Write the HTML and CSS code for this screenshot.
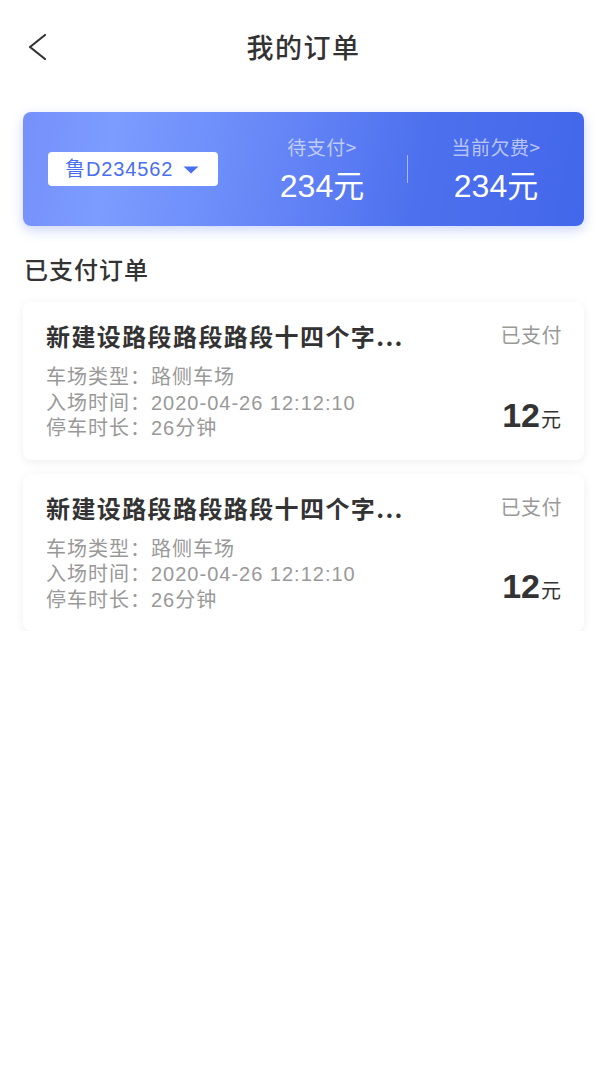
FILE: index.html
```html
<!DOCTYPE html>
<html lang="zh-CN">
<head>
<meta charset="utf-8">
<title>我的订单</title>
<link rel="stylesheet" href="styles.css">
</head>
<body>
<header class="nav">
  <div class="nav-left">
    <svg class="back" width="20" height="28" viewBox="0 0 20 28" aria-hidden="true">
      <path d="M18 2 L3 14 L18 26" fill="none" stroke="#333" stroke-width="2.2" stroke-linecap="round" stroke-linejoin="round"/>
    </svg>
  </div>
  <h1 class="nav-title">我的订单</h1>
  <div class="nav-right"></div>
</header>

<section class="summary">
  <div class="plate">
    <span class="plate-no">鲁D234562</span>
    <svg class="caret" width="16" height="8" viewBox="0 0 16 8" aria-hidden="true"><path d="M0.5 0.5 H15.5 L8 7.5 Z" fill="#4a6ef0"/></svg>
  </div>
  <div class="stat stat-first">
    <div class="stat-label">待支付&gt;</div>
    <div class="stat-value">234<span class="unit">元</span></div>
  </div>
  <div class="divider"></div>
  <div class="stat stat-last">
    <div class="stat-label">当前欠费&gt;</div>
    <div class="stat-value">234<span class="unit">元</span></div>
  </div>
</section>

<h2 class="section-title">已支付订单</h2>

<div class="orders">
  <article class="order">
    <div class="order-main">
      <div class="order-title">新建设路段路段路段十四个字...</div>
      <div class="order-info">
        <div class="row">车场类型：路侧车场</div>
        <div class="row">入场时间：2020-04-26 12:12:10</div>
        <div class="row">停车时长：26分钟</div>
      </div>
    </div>
    <div class="order-side">
      <div class="status">已支付</div>
      <div class="price">12<span class="price-unit">元</span></div>
    </div>
  </article>
  <article class="order">
    <div class="order-main">
      <div class="order-title">新建设路段路段路段十四个字...</div>
      <div class="order-info">
        <div class="row">车场类型：路侧车场</div>
        <div class="row">入场时间：2020-04-26 12:12:10</div>
        <div class="row">停车时长：26分钟</div>
      </div>
    </div>
    <div class="order-side">
      <div class="status">已支付</div>
      <div class="price">12<span class="price-unit">元</span></div>
    </div>
  </article>
</div>
</body>
</html>
```

FILE: styles.css
```css
* { box-sizing: border-box; }
html, body { margin: 0; padding: 0; background: #fff; }
body {
  font-family: "Liberation Sans", "Noto Sans CJK SC", sans-serif;
  color: #333;
  width: 607px;
}

.nav {
  height: 94px;
  display: grid;
  grid-template-columns: 1fr auto 1fr;
  align-items: center;
}
.nav-left { padding-left: 27px; display: flex; align-items: center; }
.back { display: block; }
.nav-title {
  margin: 0;
  font-family: "Noto Sans CJK SC", sans-serif;
  font-size: 27px;
  font-weight: 500;
  line-height: 36px;
  letter-spacing: 1.5px;
  color: #333;
}

.summary {
  margin: 18px 23px 0;
  height: 114px;
  border-radius: 8px;
  background: linear-gradient(100deg, #7690fb 0%, #7c9cff 16%, #6686f7 45%, #4d70ee 70%, #4367ea 100%);
  box-shadow: 0 4px 12px rgba(68, 103, 234, 0.28);
  display: flex;
  align-items: center;
  padding-left: 25px;
}
.plate {
  width: 170px;
  height: 34px;
  background: #fff;
  border-radius: 4px;
  display: flex;
  align-items: center;
  padding-left: 17px;
  gap: 10px;
}
.plate-no {
  font-size: 20px;
  letter-spacing: 0.9px;
  color: #4a6ef0;
  line-height: 34px;
}
.caret { display: block; margin-top: 1px; }

.stat {
  display: flex;
  flex-direction: column;
  align-items: center;
  color: #fff;
}
.stat-first { width: 170px; margin-left: 19px; }
.stat-last { flex: 1; }
.stat-label {
  font-family: "Noto Sans CJK SC", sans-serif;
  font-size: 19px;
  line-height: 26px;
  color: rgba(255, 255, 255, 0.62);
  letter-spacing: 0.5px;
}
.stat-value {
  margin-top: 8px;
  font-size: 32px;
  line-height: 36px;
  color: #fff;
}
.unit { font-family: "Noto Sans CJK SC", sans-serif; font-size: 31px; line-height: 1; }
.divider {
  width: 1px;
  height: 28px;
  background: rgba(255, 255, 255, 0.5);
}

.section-title {
  margin: 26px 0 0 24px;
  font-family: "Noto Sans CJK SC", sans-serif;
  font-size: 24px;
  font-weight: 500;
  line-height: 34px;
  letter-spacing: 1px;
  color: #333;
}

.orders {
  margin: 16px 23px 0;
  display: flex;
  flex-direction: column;
  gap: 14px;
}
.order {
  background: #fff;
  border-radius: 8px;
  box-shadow: 0 2px 10px rgba(0, 0, 0, 0.07);
  padding: 18px 23px 18px;
  display: flex;
  justify-content: space-between;
}
.order-title {
  font-family: "Noto Sans CJK SC", sans-serif;
  font-size: 24px;
  font-weight: 700;
  line-height: 32px;
  letter-spacing: 1.4px;
  color: #333;
}
.order-info {
  margin-top: 13px;
  font-size: 20px;
  line-height: 25.5px;
  letter-spacing: 1px;
  color: #999;
}

.order-side {
  display: flex;
  flex-direction: column;
  justify-content: space-between;
  align-items: flex-end;
}
.status {
  font-family: "Noto Sans CJK SC", sans-serif;
  font-size: 20px;
  line-height: 30px;
  letter-spacing: 0.5px;
  margin-right: -1px;
  color: #999;
}
.price {
  font-size: 34px;
  font-weight: 700;
  line-height: 40px;
  margin-bottom: 7px;
  color: #333;
}
.price-unit {
  font-family: "Noto Sans CJK SC", sans-serif;
  font-size: 20px;
  font-weight: 400;
  line-height: 1;
  margin-left: 1px;
}
```
